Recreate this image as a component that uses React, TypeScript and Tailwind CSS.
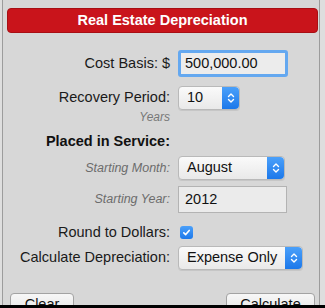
import React from "react"

const font = { fontFamily: '"Liberation Sans", Arial, Helvetica, sans-serif' }

function Stepper() {
  return (
    <div className="w-[17px] h-full rounded-r-[4px] bg-gradient-to-b from-[#4aa0fa] to-[#1b78ea] flex items-center justify-center">
      <svg width="8" height="12" viewBox="0 0 8 12" fill="none" stroke="white" strokeWidth="1.4" strokeLinecap="round" strokeLinejoin="round">
        <path d="M1.5 4.5 L4 2 L6.5 4.5" />
        <path d="M1.5 7.5 L4 10 L6.5 7.5" />
      </svg>
    </div>
  )
}

function Select({ value, width }: { value: string; width: string }) {
  return (
    <div className={`${width} h-full flex rounded-[4px] border border-[#b9b9b9] bg-gradient-to-b from-[#fafafa] to-[#e9e9e9] shadow-[0_1px_0_rgba(0,0,0,0.08)]`}>
      <div className="flex-1 flex items-center pl-[8px] text-[14.5px] text-[#111]">{value}</div>
      <Stepper />
    </div>
  )
}

function Row({ label, className, children, labelClass }: { label: string; className: string; children?: React.ReactNode; labelClass?: string }) {
  return (
    <div className={`grid grid-cols-[167px_1fr] gap-x-[8px] items-center ${className}`}>
      <div className={`text-right whitespace-nowrap ${labelClass ?? "text-[14.5px] text-[#1a1a1a]"}`}>{label}</div>
      <div className="h-full flex items-center">{children}</div>
    </div>
  )
}

export default function App() {
  return (
    <div className="w-[325px] h-[308px] overflow-hidden bg-[#dedede]" style={font}>
      <div className="h-[305px] overflow-hidden pl-[2px] pr-[5px]">
        <div className="h-full bg-[#d7d7d7] border-x border-[#9c9c9c] pt-[8px]">
          {/* Header */}
          <div className="ml-[4px] mr-[1px] h-[25px] rounded-[4px] bg-[#c9141b] border border-[#a80f14] flex items-center justify-center">
            <span className="text-white font-bold text-[14.5px]">Real Estate Depreciation</span>
          </div>

          <Row label="Cost Basis: $" className="mt-[17px] h-[27px]">
            <div className="w-[110px] h-[27px] border-[3px] border-[#64a8f0] rounded-[3px] bg-[#ececec] flex items-center pl-[4px] text-[14.5px] text-[#111]">
              500,000.00
            </div>
          </Row>

          <Row label="Recovery Period:" className="mt-[9px] h-[21px]">
            <Select value="10" width="w-[62px]" />
          </Row>

          <Row label="Years" className="mt-[1px] h-[14px]" labelClass="italic text-[12px] text-[#777]" />

          <Row label="Placed in Service:" className="mt-[9px] h-[18px]" labelClass="font-bold text-[14.5px] text-[#111]" />

          <Row label="Starting Month:" className="mt-[7px] h-[21px]" labelClass="italic text-[12.5px] text-[#6c6c6c]">
            <Select value="August" width="w-[107px]" />
          </Row>

          <Row label="Starting Year:" className="mt-[9px] h-[27px]" labelClass="italic text-[12.5px] text-[#6c6c6c]">
            <div className="w-[109px] h-[27px] border border-[#b3b3b3] bg-[#ebebeb] flex items-center pl-[6px] text-[14.5px] text-[#111]">
              2012
            </div>
          </Row>

          <Row label="Round to Dollars:" className="mt-[9px] h-[14px]">
            <div className="ml-[2px] w-[13px] h-[13px] rounded-[3px] bg-gradient-to-b from-[#4aa0fa] to-[#1b78ea] flex items-center justify-center">
              <svg width="9" height="9" viewBox="0 0 9 9" fill="none" stroke="white" strokeWidth="1.6" strokeLinecap="round" strokeLinejoin="round">
                <path d="M1.8 4.8 L3.7 6.6 L7.2 2.4" />
              </svg>
            </div>
          </Row>

          <Row label="Calculate Depreciation:" className="mt-[10px] h-[22px]">
            <Select value="Expense Only" width="w-[125px]" />
          </Row>

          {/* Buttons */}
          <div className="mt-[25px] flex justify-between pl-[7px] pr-[4px]">
            <div className="w-[64px] h-[24px] rounded-[4px] border border-[#a3a3a3] bg-gradient-to-b from-[#f7f7f7] to-[#e4e4e4] flex items-center justify-center text-[14.5px] text-[#111]">
              Clear
            </div>
            <div className="w-[89px] h-[24px] rounded-[4px] border border-[#a3a3a3] bg-gradient-to-b from-[#f7f7f7] to-[#e4e4e4] flex items-center justify-center text-[14.5px] text-[#111]">
              Calculate
            </div>
          </div>
        </div>
      </div>
      <div className="h-[3px] bg-black" />
    </div>
  )
}
